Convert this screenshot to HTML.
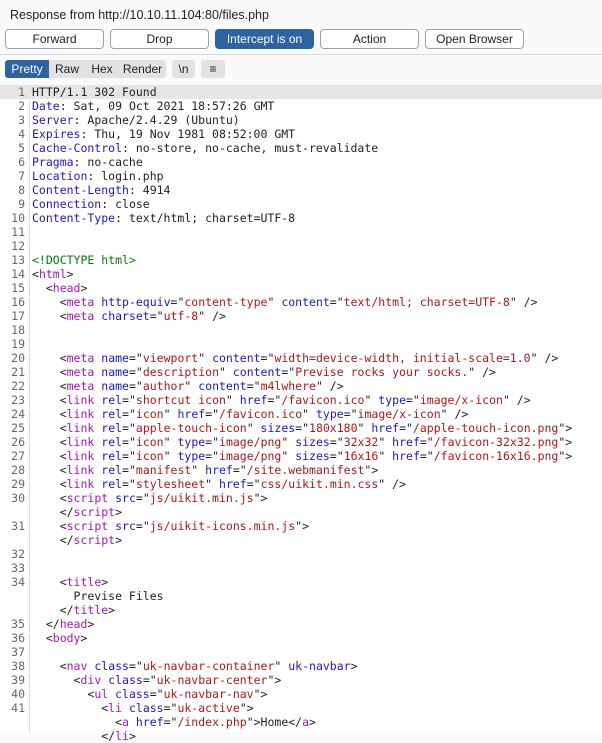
<!DOCTYPE html>
<html><head><meta charset="utf-8"><style>
*{margin:0;padding:0;box-sizing:border-box}
body{width:602px;height:733px;overflow:hidden;background:#fafafa;font-family:"Liberation Sans","DejaVu Sans",sans-serif;position:relative}
.title{position:absolute;left:10px;top:8px;font-size:12.5px;color:#222}
.btn{position:absolute;top:29px;height:20px;width:99px;border:1px solid #a0a0ab;border-radius:4px;background:#fff;font-size:12px;text-align:center;line-height:18px;color:#222}
.btn.on{background:#2c63a0;border-color:#2c63a0;color:#fff}
.sep{position:absolute;left:0;top:54px;width:602px;height:1px;background:#d8d8d8}
.tabs{position:absolute;top:60px;height:18px;font-size:12px;line-height:18px;color:#222}
.tab{position:absolute;top:0;height:18px;background:#e2e2e2;text-align:center}
.code{position:absolute;left:0;top:85px;width:602px;height:648px;background:#fff}
.gut{position:absolute;left:29px;top:0;width:1px;height:648px;background:#ddd}
.pre{font-family:"DejaVu Sans Mono","Liberation Mono",monospace;font-size:11.5px;line-height:14px;color:#222;position:relative}
.l{display:block;height:14px;white-space:pre}
.n{display:inline-block;width:25px;text-align:right;color:#666;margin-right:7px}
.hl{background:#e6e6e6}
.t{color:#a01ab0}.a{color:#1a1ab8}.v{color:#a81a1a}.d{color:#0a7a0a}.h{color:#1a1ab8}
</style></head><body>
<div class="title">Response from http://10.10.11.104:80/files.php</div>
<div class="btn" style="left:5px">Forward</div>
<div class="btn" style="left:110px">Drop</div>
<div class="btn on" style="left:215px">Intercept is on</div>
<div class="btn" style="left:320px">Action</div>
<div class="btn" style="left:425px">Open Browser</div>
<div class="sep"></div>
<div class="tabs">
<div class="tab" style="left:5px;width:44px;background:#2c63a0;color:#fff;border-radius:3px 0 0 3px">Pretty</div>
<div class="tab" style="left:49px;width:36px">Raw</div>
<div class="tab" style="left:85px;width:34px">Hex</div>
<div class="tab" style="left:119px;width:47px;border-radius:0 3px 3px 0">Render</div>
<div class="tab" style="left:172px;width:23px;border-radius:3px">\n</div>
<div class="tab" style="left:201px;width:24px;border-radius:3px">≡</div>
</div>
<div class="code"><div class="gut"></div><div class="pre"><span class="l hl"><span class="n">1</span>HTTP/1.1 302 Found</span><span class="l"><span class="n">2</span><span class="h">Date</span>: Sat, 09 Oct 2021 18:57:26 GMT</span><span class="l"><span class="n">3</span><span class="h">Server</span>: Apache/2.4.29 (Ubuntu)</span><span class="l"><span class="n">4</span><span class="h">Expires</span>: Thu, 19 Nov 1981 08:52:00 GMT</span><span class="l"><span class="n">5</span><span class="h">Cache-Control</span>: no-store, no-cache, must-revalidate</span><span class="l"><span class="n">6</span><span class="h">Pragma</span>: no-cache</span><span class="l"><span class="n">7</span><span class="h">Location</span>: login.php</span><span class="l"><span class="n">8</span><span class="h">Content-Length</span>: 4914</span><span class="l"><span class="n">9</span><span class="h">Connection</span>: close</span><span class="l"><span class="n">10</span><span class="h">Content-Type</span>: text/html; charset=UTF-8</span><span class="l"><span class="n">11</span></span><span class="l"><span class="n">12</span></span><span class="l"><span class="n">13</span><span class="d">&lt;!DOCTYPE html&gt;</span></span><span class="l"><span class="n">14</span>&lt;<span class="t">html</span>&gt;</span><span class="l"><span class="n">15</span>  &lt;<span class="t">head</span>&gt;</span><span class="l"><span class="n">16</span>    &lt;<span class="t">meta</span> <span class="a">http-equiv</span>="<span class="v">content-type</span>" <span class="a">content</span>="<span class="v">text/html; charset=UTF-8</span>" /&gt;</span><span class="l"><span class="n">17</span>    &lt;<span class="t">meta</span> <span class="a">charset</span>="<span class="v">utf-8</span>" /&gt;</span><span class="l"><span class="n">18</span></span><span class="l"><span class="n">19</span></span><span class="l"><span class="n">20</span>    &lt;<span class="t">meta</span> <span class="a">name</span>="<span class="v">viewport</span>" <span class="a">content</span>="<span class="v">width=device-width, initial-scale=1.0</span>" /&gt;</span><span class="l"><span class="n">21</span>    &lt;<span class="t">meta</span> <span class="a">name</span>="<span class="v">description</span>" <span class="a">content</span>="<span class="v">Previse rocks your socks.</span>" /&gt;</span><span class="l"><span class="n">22</span>    &lt;<span class="t">meta</span> <span class="a">name</span>="<span class="v">author</span>" <span class="a">content</span>="<span class="v">m4lwhere</span>" /&gt;</span><span class="l"><span class="n">23</span>    &lt;<span class="t">link</span> <span class="a">rel</span>="<span class="v">shortcut icon</span>" <span class="a">href</span>="<span class="v">/favicon.ico</span>" <span class="a">type</span>="<span class="v">image/x-icon</span>" /&gt;</span><span class="l"><span class="n">24</span>    &lt;<span class="t">link</span> <span class="a">rel</span>="<span class="v">icon</span>" <span class="a">href</span>="<span class="v">/favicon.ico</span>" <span class="a">type</span>="<span class="v">image/x-icon</span>" /&gt;</span><span class="l"><span class="n">25</span>    &lt;<span class="t">link</span> <span class="a">rel</span>="<span class="v">apple-touch-icon</span>" <span class="a">sizes</span>="<span class="v">180x180</span>" <span class="a">href</span>="<span class="v">/apple-touch-icon.png</span>"&gt;</span><span class="l"><span class="n">26</span>    &lt;<span class="t">link</span> <span class="a">rel</span>="<span class="v">icon</span>" <span class="a">type</span>="<span class="v">image/png</span>" <span class="a">sizes</span>="<span class="v">32x32</span>" <span class="a">href</span>="<span class="v">/favicon-32x32.png</span>"&gt;</span><span class="l"><span class="n">27</span>    &lt;<span class="t">link</span> <span class="a">rel</span>="<span class="v">icon</span>" <span class="a">type</span>="<span class="v">image/png</span>" <span class="a">sizes</span>="<span class="v">16x16</span>" <span class="a">href</span>="<span class="v">/favicon-16x16.png</span>"&gt;</span><span class="l"><span class="n">28</span>    &lt;<span class="t">link</span> <span class="a">rel</span>="<span class="v">manifest</span>" <span class="a">href</span>="<span class="v">/site.webmanifest</span>"&gt;</span><span class="l"><span class="n">29</span>    &lt;<span class="t">link</span> <span class="a">rel</span>="<span class="v">stylesheet</span>" <span class="a">href</span>="<span class="v">css/uikit.min.css</span>" /&gt;</span><span class="l"><span class="n">30</span>    &lt;<span class="t">script</span> <span class="a">src</span>="<span class="v">js/uikit.min.js</span>"&gt;</span><span class="l"><span class="n"></span>    &lt;/<span class="t">script</span>&gt;</span><span class="l"><span class="n">31</span>    &lt;<span class="t">script</span> <span class="a">src</span>="<span class="v">js/uikit-icons.min.js</span>"&gt;</span><span class="l"><span class="n"></span>    &lt;/<span class="t">script</span>&gt;</span><span class="l"><span class="n">32</span></span><span class="l"><span class="n">33</span></span><span class="l"><span class="n">34</span>    &lt;<span class="t">title</span>&gt;</span><span class="l"><span class="n"></span>      Previse Files</span><span class="l"><span class="n"></span>    &lt;/<span class="t">title</span>&gt;</span><span class="l"><span class="n">35</span>  &lt;/<span class="t">head</span>&gt;</span><span class="l"><span class="n">36</span>  &lt;<span class="t">body</span>&gt;</span><span class="l"><span class="n">37</span></span><span class="l"><span class="n">38</span>    &lt;<span class="t">nav</span> <span class="a">class</span>="<span class="v">uk-navbar-container</span>" <span class="a">uk-navbar</span>&gt;</span><span class="l"><span class="n">39</span>      &lt;<span class="t">div</span> <span class="a">class</span>="<span class="v">uk-navbar-center</span>"&gt;</span><span class="l"><span class="n">40</span>        &lt;<span class="t">ul</span> <span class="a">class</span>="<span class="v">uk-navbar-nav</span>"&gt;</span><span class="l"><span class="n">41</span>          &lt;<span class="t">li</span> <span class="a">class</span>="<span class="v">uk-active</span>"&gt;</span><span class="l"><span class="n"></span>            &lt;<span class="t">a</span> <span class="a">href</span>="<span class="v">/index.php</span>"&gt;Home&lt;/<span class="t">a</span>&gt;</span><span class="l"><span class="n"></span>          &lt;/<span class="t">li</span>&gt;</span></div></div>
</body></html>
